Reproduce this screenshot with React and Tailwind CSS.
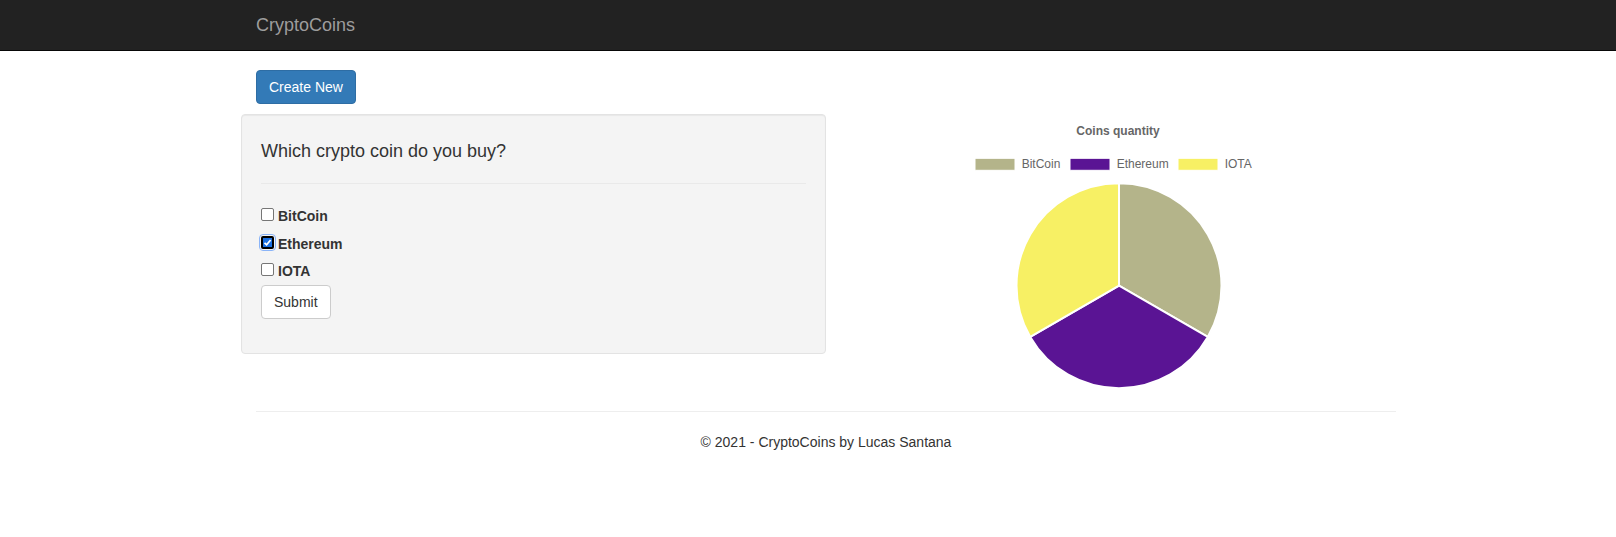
const coins = [
  { name: "BitCoin", checked: false },
  { name: "Ethereum", checked: true },
  { name: "IOTA", checked: false },
];

// pie geometry (svg coords inside the 585x277 chart box)
const cx = 293;
const cy = 171.7;
const r = 102.5;

const slices = [
  { d: `M${cx} ${cy} L${cx} ${cy - r} A${r} ${r} 0 0 1 381.77 222.95 Z`, color: "#b4b48a" },
  { d: `M${cx} ${cy} L381.77 222.95 A${r} ${r} 0 0 1 204.23 222.95 Z`, color: "#5a1494" },
  { d: `M${cx} ${cy} L204.23 222.95 A${r} ${r} 0 0 1 ${cx} ${cy - r} Z`, color: "#f7f064" },
];

const legend = [
  { label: "BitCoin", x: 149, color: "#b4b48a" },
  { label: "Ethereum", x: 244, color: "#5a1494" },
  { label: "IOTA", x: 352, color: "#f7f064" },
];

function Checkbox({ checked }) {
  if (checked) {
    return (
      <span className="mt-[2px] mr-[4px] flex h-[13px] w-[13px] items-center justify-center rounded-[2px] border-2 border-black bg-[#1a6fe0] outline outline-1 outline-offset-1 outline-[#8ab4f8]">
        <svg width="9" height="9" viewBox="0 0 9 9">
          <path d="M1.5 4.8 L3.6 6.8 L7.6 2" fill="none" stroke="#fff" strokeWidth="1.8" />
        </svg>
      </span>
    );
  }
  return (
    <span className="mt-[2px] mr-[4px] block h-[13px] w-[13px] rounded-[2px] border border-[#767676] bg-white" />
  );
}

function CoinsChart() {
  return (
    <svg width="585" height="277" viewBox="0 0 585 277" fontFamily="'Liberation Sans', Arial, sans-serif">
      <text x="292" y="21" textAnchor="middle" fontSize="12" fontWeight="bold" fill="#666">
        Coins quantity
      </text>

      {/* legend */}
      {legend.map((l) => (
        <g key={l.label}>
          <rect x={l.x} y="44.3" width="40" height="12" fill={l.color} stroke="#fff" strokeWidth="1" />
          <text x={l.x + 46.7} y="54.3" fontSize="12" fill="#666">
            {l.label}
          </text>
        </g>
      ))}

      {/* pie */}
      {slices.map((s, i) => (
        <path key={i} d={s.d} fill={s.color} stroke="#fff" strokeWidth="2" strokeLinejoin="round" />
      ))}
    </svg>
  );
}

export default function App() {
  return (
    <div className="min-h-screen bg-white font-['Liberation_Sans',Arial,sans-serif] text-[14px] leading-[20px] text-[#333]">
      {/* NAVBAR */}
      <nav className="h-[51px] border-b border-[#080808] bg-[#222]">
        <div className="ml-[241px] w-[1170px] px-[15px]">
          <a href="#" className="block py-[15px] text-[18px] leading-[20px] text-[#9d9d9d]">
            CryptoCoins
          </a>
        </div>
      </nav>

      <div className="ml-[241px] w-[1170px] px-[15px] pt-[19px]">
        <p className="mb-[10px]">
          <a
            href="#"
            className="inline-block rounded-[4px] border border-[#2e6da4] bg-[#337ab7] px-[12px] py-[6px] text-[14px] leading-[20px] text-white"
          >
            Create New
          </a>
        </p>

        <div className="-mx-[15px] flex items-start">
          {/* FORM */}
          <div className="w-[585px] rounded-[4px] border border-[#e3e3e3] bg-[#f4f4f4] p-[19px] shadow-[inset_0_1px_1px_rgba(0,0,0,0.05)]">
            <h4 className="mt-[7px] text-[18px] leading-[20px] font-normal text-[#333]">
              Which crypto coin do you buy?
            </h4>
            <hr className="mt-[22px] border-t border-[#e9e9e9]" />

            <div className="mt-[22px]">
              {coins.map((c) => (
                <label key={c.name} className="mb-[7.5px] flex h-[20px] items-start font-bold">
                  <Checkbox checked={c.checked} />
                  {c.name}
                </label>
              ))}
            </div>

            <button className="mt-[-3.5px] mb-[15px] rounded-[4px] border border-[#ccc] bg-white px-[12px] py-[6px] text-[14px] leading-[20px] text-[#333]">
              Submit
            </button>
          </div>

          {/* CHART */}
          <div className="w-[585px]">
            <CoinsChart />
          </div>
        </div>

        {/* FOOTER */}
        <hr className="mt-[20px] border-t border-[#eee]" />
        <footer className="mt-[20px] text-center">
          <p>© 2021 - CryptoCoins by Lucas Santana</p>
        </footer>
      </div>
    </div>
  );
}
